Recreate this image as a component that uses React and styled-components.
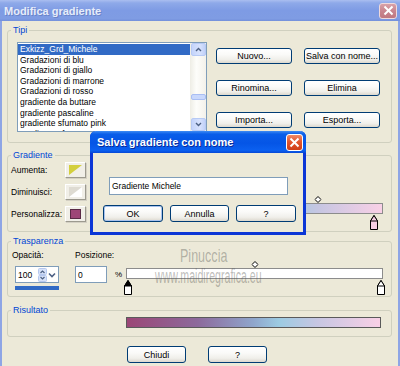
import React from 'react';
import styled, { createGlobalStyle } from 'styled-components';

const GlobalStyle = createGlobalStyle`
  html, body {
    margin: 0;
    padding: 0;
    background: #ece9d8;
  }
  body {
    font-family: "Liberation Sans", Arial, sans-serif;
    font-size: 8.5px;
    color: #000;
  }
`;

const Window = styled.div`
  position: relative;
  width: 400px;
  height: 366px;
  overflow: hidden;
  display: flex;
  flex-direction: column;
  background: #ece9d8;
`;

const TitleBar = styled.div`
  flex: none;
  height: 21px;
  display: flex;
  align-items: center;
  justify-content: space-between;
  padding: 0 3px 0 4px;
  background: linear-gradient(180deg, #aabef0 0%, #8ea9e9 14%, #7e9be4 50%, #7f9ce3 88%, #7390db 100%);
`;

const TitleText = styled.span`
  font: bold 11px "Liberation Sans", Arial, sans-serif;
  color: ${(p) => (p.$active ? '#ffffff' : '#e6ecfa')};
  text-shadow: ${(p) => (p.$active ? '1px 1px 0 #0a2a9a' : '1px 1px 0 #6a84c8')};
  white-space: nowrap;
`;

const CloseBox = styled.div`
  box-sizing: border-box;
  width: ${(p) => p.$w}px;
  height: ${(p) => p.$h}px;
  border-radius: 3px;
  border: 1px solid ${(p) => (p.$active ? '#ffffff' : '#efd9dc')};
  background: ${(p) =>
    p.$active
      ? 'linear-gradient(180deg, #f08a68 0%, #e2562f 45%, #cf3e18 100%)'
      : 'linear-gradient(180deg, #d8a2a9 0%, #c9858f 50%, #c07880 100%)'};
  display: flex;
  align-items: center;
  justify-content: center;
`;

const Body = styled.div`
  flex: 1;
  display: flex;
  flex-direction: column;
  border-left: 2px solid #8ea5e5;
  border-right: 2px solid #8ea5e5;
  padding: 4px 6px 0 5px;
`;

const Group = styled.fieldset`
  margin: ${(p) => p.$mt || 0}px 0 0 0;
  min-width: 0;
  border: 1px solid #d0d0bf;
  border-radius: 3px;
  padding: ${(p) => p.$pad};
`;

const Legend = styled.legend`
  padding: 0 2px;
  margin: 0;
  color: #0046d5;
  font-size: 9px;
  line-height: 10px;
`;

/* ---------- Tipi ---------- */

const TipiRow = styled.div`
  display: flex;
  gap: 9px;
  margin-left: 6px;
`;

const ListBox = styled.div`
  box-sizing: border-box;
  width: 190px;
  height: 90px;
  border: 1px solid #7f9db9;
  background: #fff;
  display: flex;
  overflow: hidden;
`;

const Items = styled.div`
  flex: 1;
  min-width: 0;
  padding-top: 1px;
`;

const Item = styled.div`
  height: 10.6px;
  line-height: 10.6px;
  padding-left: 2px;
  white-space: nowrap;
  background: ${(p) => (p.$selected ? '#316ac5' : 'transparent')};
  color: ${(p) => (p.$selected ? '#fff' : '#000')};
`;

const ScrollBar = styled.div`
  width: 16px;
  flex: none;
  display: flex;
  flex-direction: column;
  background: linear-gradient(90deg, #eeede5 0%, #fdfdfa 40%, #f3f1ea 100%);
`;

const ScrollBtn = styled.div`
  box-sizing: border-box;
  height: 13px;
  margin: 0 0 0 1px;
  border: 1px solid #b7caf5;
  border-radius: 2px;
  background: linear-gradient(90deg, #c4d4fb 0%, #d7e2fd 60%, #c1d1f8 100%);
  display: flex;
  align-items: center;
  justify-content: center;
`;

const Track = styled.div`
  flex: 1;
`;

const Thumb = styled.div`
  box-sizing: border-box;
  height: 6px;
  margin: 38px 0 0 1px;
  border: 1px solid #a9bef3;
  border-radius: 2px;
  background: #c9d8fc;
`;

const ButtonGrid = styled.div`
  display: grid;
  grid-template-columns: 76px 76px;
  grid-auto-rows: 16px;
  column-gap: 12px;
  row-gap: 16px;
  margin-top: 6px;
`;

const XPButton = styled.button`
  box-sizing: border-box;
  width: ${(p) => p.$w || 76}px;
  height: ${(p) => p.$h || 16}px;
  padding: 0;
  border: 1px solid #003c74;
  border-radius: 3px;
  background: linear-gradient(180deg, #ffffff 0%, #fafaf8 40%, #f0efea 75%, #dcd8ce 100%);
  box-shadow: ${(p) => (p.$default ? 'inset 0 0 0 1px #a9c3ee' : 'none')};
  font: 9px "Liberation Sans", Arial, sans-serif;
  color: #000;
  white-space: nowrap;
`;

/* ---------- Gradiente ---------- */

const GradRow = styled.div`
  display: flex;
`;

const SwatchGrid = styled.div`
  display: grid;
  grid-template-columns: 54px 21px;
  grid-auto-rows: 16px;
  row-gap: 6px;
  align-items: center;
  padding-bottom: 8px;
`;

const Label = styled.span`
  white-space: nowrap;
  line-height: 10px;
`;

const SwatchButton = styled.div`
  box-sizing: border-box;
  width: 21px;
  height: 16px;
  border: 1px solid;
  border-color: #ffffff #9c9a8f #9c9a8f #ffffff;
  box-shadow: 1px 1px 0 #d4d0c4;
  background: #f1efe8;
  display: flex;
  align-items: center;
  justify-content: center;
`;

const Editor = styled.div`
  width: 257px;
  margin-left: ${(p) => p.$ml || 0}px;
  margin-top: ${(p) => p.$mt || 0}px;
  align-self: ${(p) => p.$align || 'auto'};
  display: flex;
  flex-direction: column;
`;

const StopTrack = styled.div`
  position: relative;
  height: ${(p) => p.$h}px;
`;

const Pin = styled.div`
  position: absolute;
  top: ${(p) => p.$top || 0}px;
  transform: translateX(-50%);
  line-height: 0;
`;

const Bar = styled.div`
  box-sizing: border-box;
  height: 11px;
  width: ${(p) => p.$w || 257}px;
  margin-left: ${(p) => p.$ml || 0}px;
  border: 1px solid ${(p) => p.$border || '#8c8c8c'};
  background: ${(p) => p.$bg};
`;

/* ---------- Trasparenza ---------- */

const TransGrid = styled.div`
  display: grid;
  grid-template-columns: 64px 40px 11px 257px;
  align-items: start;
`;

const Field = styled.div`
  display: flex;
  flex-direction: column;
`;

const FieldLabel = styled.span`
  line-height: 10px;
  margin: 0 0 6px ${(p) => p.$ml || 0}px;
`;

const TextBox = styled.div`
  box-sizing: border-box;
  width: ${(p) => p.$w}px;
  height: ${(p) => p.$h || 17}px;
  margin-left: ${(p) => p.$ml || 0}px;
  border: 1px solid #7f9db9;
  background: #fff;
  display: flex;
  align-items: center;
  justify-content: space-between;
  padding: 0 1px 0 2px;
  font-size: 8.5px;
`;

const FocusBar = styled.div`
  width: 44px;
  height: 4px;
  margin: 3px 0 0 4px;
  background: #316ac5;
`;

const Percent = styled.span`
  margin-top: 20px;
  font-size: 8px;
`;

const Watermark = styled.div`
  position: absolute;
  left: ${(p) => p.$x}px;
  top: ${(p) => p.$y}px;
  font-size: ${(p) => p.$size}px;
  line-height: ${(p) => p.$size}px;
  color: rgba(95, 95, 90, 0.42);
  transform: scaleX(${(p) => p.$sx});
  transform-origin: left top;
  white-space: nowrap;
  pointer-events: none;
`;

/* ---------- Footer ---------- */

const Footer = styled.div`
  display: flex;
  gap: 22px;
  margin-top: 9px;
  padding-left: 120px;
`;

/* ---------- Dialog ---------- */

const Dialog = styled.div`
  position: absolute;
  left: 90px;
  top: 131px;
  width: 216px;
  height: 104px;
  box-sizing: border-box;
  display: flex;
  flex-direction: column;
  background: #ece9d8;
  border: 3px solid #0b36d6;
  border-top: none;
  border-radius: 6px 6px 0 0;
`;

const DialogTitle = styled.div`
  height: 22px;
  margin: 0 -3px;
  padding: 0 3px 0 7px;
  display: flex;
  align-items: center;
  justify-content: space-between;
  border-radius: 6px 6px 0 0;
  background: linear-gradient(180deg, #3f8cf3 0%, #0a5ee9 14%, #0555e6 55%, #0b60f0 88%, #0748d6 100%);
`;

const DialogBody = styled.div`
  padding: 24px 0 0 10px;
  display: flex;
  flex-direction: column;
`;

const DialogButtons = styled.div`
  display: flex;
  gap: 7px;
  margin-top: 10px;
`;

const gradientFill =
  'linear-gradient(90deg, #9b4676 0%, #8d6a9c 28%, #8fa6cc 50%, #9ccbe2 60%, #c6c6e2 75%, #f9d0e6 100%)';

const items = [
  'Exkizz_Grd_Michele',
  'Gradazioni di blu',
  'Gradazioni di giallo',
  'Gradazioni di marrone',
  'Gradazioni di rosso',
  'gradiente da buttare',
  'gradiente pascaline',
  'gradiente sfumato pink',
  'gradiente sfumato',
];

function CloseX({ size }) {
  return (
    <svg width={size} height={size} viewBox="0 0 10 10">
      <path d="M2 2 L8 8 M8 2 L2 8" stroke="#fff" strokeWidth="1.8" strokeLinecap="square" />
    </svg>
  );
}

function Chevron({ up }) {
  return (
    <svg width="7" height="5" viewBox="0 0 7 5">
      <path d={up ? 'M1 4 L3.5 1.5 L6 4' : 'M1 1 L3.5 3.5 L6 1'} stroke="#4d6185" strokeWidth="1.4" fill="none" />
    </svg>
  );
}

function Diamond() {
  return (
    <svg width="7" height="7" viewBox="0 0 7 7">
      <path d="M3.5 0.5 L6.5 3.5 L3.5 6.5 L0.5 3.5 Z" fill="#fff" stroke="#000" />
    </svg>
  );
}

function Marker({ top, body }) {
  return (
    <svg width="9" height="15" viewBox="0 0 9 15">
      <path d="M4.5 0.5 L8 6 L8 14.5 L1 14.5 L1 6 Z" fill={body} stroke="#000" />
      <path d="M4.5 0.5 L8 6 L1 6 Z" fill={top} stroke="#000" />
    </svg>
  );
}

function GradientEditor({ bg, diamonds, markers, ...rest }) {
  return (
    <Editor {...rest}>
      <StopTrack $h={7}>
        {diamonds.map((d) => (
          <Pin key={d} style={{ left: `${d}%` }}>
            <Diamond />
          </Pin>
        ))}
      </StopTrack>
      <Bar $bg={bg} />
      <StopTrack $h={16}>
        {markers.map((m) => (
          <Pin key={m.at} $top={1} style={{ left: `${m.at}%` }}>
            <Marker top={m.top} body={m.body} />
          </Pin>
        ))}
      </StopTrack>
    </Editor>
  );
}

export default function App() {
  return (
    <Window>
      <GlobalStyle />
      <TitleBar>
        <TitleText>Modifica gradiente</TitleText>
        <CloseBox $w={18} $h={16}>
          <CloseX size={11} />
        </CloseBox>
      </TitleBar>

      <Body>
        <Group $pad="7px 10px 10px 3px">
          <Legend>Tipi</Legend>
          <TipiRow>
            <ListBox>
              <Items>
                {items.map((it, i) => (
                  <Item key={it} $selected={i === 0}>
                    {it}
                  </Item>
                ))}
              </Items>
              <ScrollBar>
                <ScrollBtn>
                  <Chevron up />
                </ScrollBtn>
                <Track>
                  <Thumb />
                </Track>
                <ScrollBtn>
                  <Chevron />
                </ScrollBtn>
              </ScrollBar>
            </ListBox>
            <ButtonGrid>
              <XPButton>Nuovo...</XPButton>
              <XPButton>Salva con nome...</XPButton>
              <XPButton>Rinomina...</XPButton>
              <XPButton>Elimina</XPButton>
              <XPButton>Importa...</XPButton>
              <XPButton>Esporta...</XPButton>
            </ButtonGrid>
          </TipiRow>
        </Group>

        <Group $mt={7} $pad="2px 7px 1px 3px">
          <Legend>Gradiente</Legend>
          <GradRow>
            <SwatchGrid>
              <Label>Aumenta:</Label>
              <SwatchButton>
                <svg width="13" height="10" viewBox="0 0 13 10">
                  <path d="M0 0 H13 L0 10 Z" fill="#d3cf3e" />
                </svg>
              </SwatchButton>
              <Label>Diminuisci:</Label>
              <SwatchButton>
                <svg width="13" height="10" viewBox="0 0 13 10">
                  <rect width="13" height="10" fill="#dedbd2" />
                  <path d="M13 0 V10 H0 Z" fill="#ffffff" />
                </svg>
              </SwatchButton>
              <Label>Personalizza:</Label>
              <SwatchButton>
                <svg width="11" height="10" viewBox="0 0 11 10">
                  <rect x="0.5" y="0.5" width="10" height="9" fill="#9e4677" stroke="#5a2a46" />
                </svg>
              </SwatchButton>
            </SwatchGrid>
            <GradientEditor
              $ml={40}
              $align="flex-end"
              bg={gradientFill}
              diamonds={[74.7]}
              markers={[{ at: 96.5, top: '#f6cde3', body: '#f6cde3' }]}
            />
          </GradRow>
        </Group>

        <Group $mt={4} $pad="4px 7px 1px 3px">
          <Legend>Trasparenza</Legend>
          <TransGrid>
            <Field>
              <FieldLabel $ml={1}>Opacità:</FieldLabel>
              <TextBox $w={44} $ml={4}>
                <span>100</span>
                <svg width="19" height="14" viewBox="0 0 19 14">
                  <rect x="0.5" y="0.5" width="8" height="6" rx="1" fill="#d6e1f9" stroke="#b6c8ef" />
                  <rect x="0.5" y="7.5" width="8" height="6" rx="1" fill="#d6e1f9" stroke="#b6c8ef" />
                  <path d="M2.5 5 L4.5 3 L6.5 5" stroke="#4d6185" strokeWidth="1.2" fill="none" />
                  <path d="M2.5 9 L4.5 11 L6.5 9" stroke="#4d6185" strokeWidth="1.2" fill="none" />
                  <path d="M11 5.5 L14 8.5 L17 5.5" stroke="#4d6185" strokeWidth="1.6" fill="none" />
                </svg>
              </TextBox>
              <FocusBar />
            </Field>
            <Field>
              <FieldLabel>Posizione:</FieldLabel>
              <TextBox $w={32}>
                <span>0</span>
              </TextBox>
            </Field>
            <Percent>%</Percent>
            <GradientEditor
              $mt={11}
              bg="#ffffff"
              diamonds={[50]}
              markers={[
                { at: 0.8, top: '#000000', body: '#ffffff' },
                { at: 99.2, top: '#ffffff', body: '#ffffff' },
              ]}
            />
          </TransGrid>
        </Group>

        <Group $mt={8} $pad="2px 7px 8px 3px">
          <Legend>Risultato</Legend>
          <Bar $ml={115} $w={255} $border="#5a5a5a" $bg={gradientFill} />
        </Group>

        <Footer>
          <XPButton $w={59} $h={17}>
            Chiudi
          </XPButton>
          <XPButton $w={59} $h={17}>
            ?
          </XPButton>
        </Footer>
      </Body>

      <Watermark $x={180} $y={246} $size={19} $sx={0.66}>
        Pinuccia
      </Watermark>
      <Watermark $x={155} $y={266} $size={20} $sx={0.53}>
        www.maidiregrafica.eu
      </Watermark>

      <Dialog>
        <DialogTitle>
          <TitleText $active>Salva gradiente con nome</TitleText>
          <CloseBox $active $w={17} $h={17}>
            <CloseX size={11} />
          </CloseBox>
        </DialogTitle>
        <DialogBody>
          <TextBox $w={179} $h={18} $ml={6}>
            <span>Gradiente Michele</span>
          </TextBox>
          <DialogButtons>
            <XPButton $w={60} $h={17} $default>
              OK
            </XPButton>
            <XPButton $w={59} $h={17}>
              Annulla
            </XPButton>
            <XPButton $w={60} $h={17}>
              ?
            </XPButton>
          </DialogButtons>
        </DialogBody>
      </Dialog>
    </Window>
  );
}
